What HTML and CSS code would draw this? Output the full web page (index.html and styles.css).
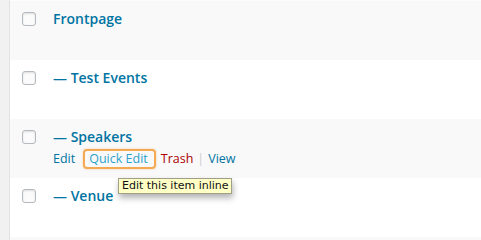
FILE: index.html
```html
<!DOCTYPE html>
<html>
<head>
<meta charset="utf-8">
<link rel="stylesheet" href="styles.css">
</head>
<body>
<div class="wrap">
  <div class="top"></div>
  <div class="row alt">
    <span class="cb"></span>
    <div class="col"><a class="title">Frontpage</a></div>
  </div>
  <div class="row">
    <span class="cb"></span>
    <div class="col"><a class="title">— Test Events</a></div>
  </div>
  <div class="row alt">
    <span class="cb"></span>
    <div class="col">
      <a class="title">— Speakers</a>
      <div class="actions">
        <a class="act">Edit</a><a class="act focus">Quick Edit</a><a class="act trash">Trash</a><span class="sep">|</span><a class="act">View</a>
        <div class="tip">Edit this item inline</div>
      </div>
    </div>
  </div>
  <div class="row">
    <span class="cb"></span>
    <div class="col"><a class="title">— Venue</a></div>
  </div>
  <div class="row alt last"></div>
</div>
</body>
</html>
```
FILE: styles.css
```css
html, body { margin: 0; padding: 0; }
body {
  background: #f1f1f1;
  font-family: "Open Sans", "Liberation Sans", sans-serif;
  width: 481px;
  height: 240px;
  overflow: hidden;
}
.wrap {
  margin-left: 9px;
  border-left: 1px solid #e3e3e3;
  background: #fff;
  height: 240px;
}
.top { height: 1px; background: #fdfdfd; }
.row {
  height: 59px;
  box-sizing: border-box;
  display: flex;
  align-items: flex-start;
  background: #fff;
}
.row.alt { background: #f9f9f9; }
.row.last { height: 3px; }
.cb {
  width: 14px;
  height: 14px;
  box-sizing: border-box;
  border: 1px solid #b4b9be;
  border-radius: 3px;
  background: #fbfbfb;
  box-shadow: inset 0 1px 2px rgba(0,0,0,0.12);
  margin: 11px 0 0 12px;
  flex: none;
}
.col {
  margin-left: 17px;
  padding-top: 8px;
  position: relative;
}
.title {
  display: block;
  font-size: 14px;
  font-weight: 600;
  color: #0074a2;
  line-height: 20px;
}
.actions {
  position: relative;
  margin-top: 2px;
  font-size: 12.5px;
  line-height: 20px;
  color: #0074a2;
  display: flex;
  align-items: center;
}
.act { color: #0074a2; }
.act.trash { color: #a00; }
.sep { color: #ccc; margin: 0 4px; }
.act.focus {
  color: #2ea2cc;
  border: 2px solid #f5a952;
  border-radius: 4px;
  padding: 0 6px 0 4px;
  margin: 0 5px 0 8px;
  line-height: 16px;
  box-shadow: 0 0 2px rgba(245,150,60,0.5);
}
.tip {
  position: absolute;
  left: 65px;
  top: 29px;
  background: #ffffc6;
  border: 1px solid #a0a088;
  font-family: "DejaVu Sans", sans-serif;
  font-size: 11px;
  line-height: 14px;
  color: #111;
  padding: 0 2px 0 3px;
  white-space: nowrap;
  box-shadow: 1px 4px 6px rgba(0,0,0,0.3);
}
```
